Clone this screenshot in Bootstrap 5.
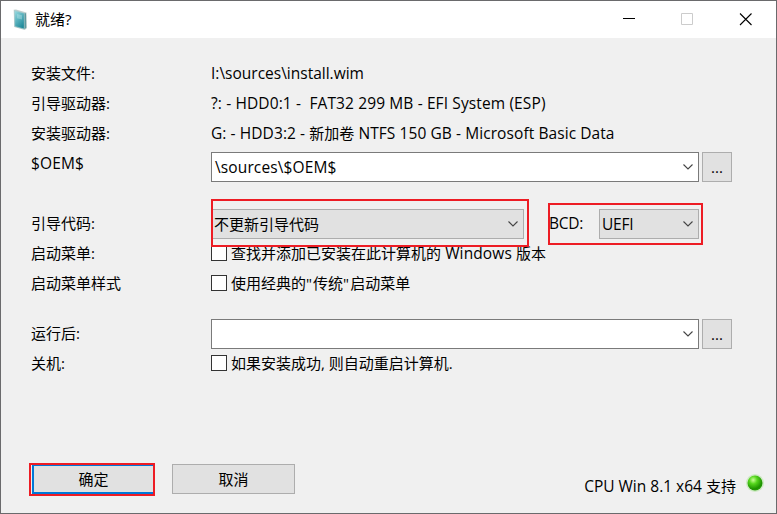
<!DOCTYPE html>
<html lang="zh-CN">
<head>
<meta charset="utf-8">
<meta name="viewport" content="width=device-width, initial-scale=1">
<title>就绪?</title>
<link href="https://cdn.jsdelivr.net/npm/bootstrap@5.3.0/dist/css/bootstrap.min.css" rel="stylesheet">
<style>
body { font-family: "Open Sans", "Noto Sans CJK SC", sans-serif; font-size: 15px; color: #000; }
.dialog { width: 777px; height: 514px; border: 1px solid #6a6a6c; background: #f0f0f0; }
.titlebar { height: 37px; padding: 0 1px 0 9px; line-height: 37px; }
.titlebar .caption { margin-left: 5px; }
.sysbtn { width: 58px; height: 37px; }
.form-area { padding: 20px 44px 0 30px; }
.line { height: 30px; line-height: 30px; white-space: pre; }
.line-tall { height: 60px; }
.line-gap { margin-top: 20px; }
.key { width: 180px; }
.combo { height: 30px; line-height: 28px; border: 1px solid #7a7a7a; background: #fff; padding: 0 4px 0 3px; margin-top: 1px; }
.combo-wide { width: 488px; }
.combo-boot { width: 313px; padding-left: 2px; }
.combo-bcd { width: 100px; margin-left: 15px; padding-left: 2px; }
.combo-gray { background: #e1e1e1; border-color: #adadad; }
.bcd-label { margin-left: 25px; width: 35px; }
.push { border: 1px solid #adadad; border-radius: 0; background: #e1e1e1; color: #000; font-size: 15px; line-height: 28px; height: 30px; padding: 0; }
.push-dots { width: 30px; margin: 1px 0 0 3px; }
.push-main { width: 123px; }
.push-ok { border: 2px solid #0078d7; line-height: 26px; }
.push-cancel { margin-left: 17px; }
.drop { margin-top: 4px; }
.tick { width: 16px; height: 16px; margin: 0 4px 0 0; border: 1px solid #333; border-radius: 0 !important; background: #fff; flex: none; }
.footer-area { padding: 0 11px 0 31px; margin-top: 86px; height: 49px; }
.status { margin-top: 7px; line-height: 30px; white-space: pre; }
.lamp { margin: 7px 0 0 9px; }
.frame { position: absolute; border: 2px solid #ed1c24; pointer-events: none; }
.frame-boot { left: 210px; top: 198px; width: 318px; height: 48px; }
.frame-bcd { left: 547px; top: 202px; width: 155px; height: 42px; }
.frame-ok { left: 28px; top: 462px; width: 126px; height: 33px; }
.latin { font-size: 15.5px; }
.loose { letter-spacing: .12px; }
.looser { letter-spacing: .3px; }
.quote { letter-spacing: 1.1px; }
.spread { letter-spacing: .08px; }
.tighter { letter-spacing: -.25px; }
</style>
</head>
<body class="overflow-hidden">
<main class="dialog position-relative overflow-hidden">
  <header class="titlebar d-flex align-items-center bg-white">
    <svg width="20" height="22" viewBox="0 0 20 22">
      <defs><linearGradient id="box" x1="0" y1="0" x2=".6" y2="1"><stop offset="0" stop-color="#9fdde2"/><stop offset=".45" stop-color="#63b8c3"/><stop offset="1" stop-color="#218a9b"/></linearGradient></defs>
      <path d="M3.700 .800 6 .500 16.500 3.600 17 19 14.800 21 4.200 18Z" fill="#c3cfce"/>
      <path d="M4.500 1.500 14.300 4.200 14.300 20 4.800 17.400Z" fill="url(#box)" stroke="#a5c9cb" stroke-width=".6"/>
      <path d="M14.600 4.300 16 4.200 16.200 18.800 14.600 20.200Z" fill="#5c999f"/>
      <path d="M7 5 12 6.300V10.500L7 9.200Z" fill="#c8eff0" opacity=".35"/>
    </svg>
    <span class="caption">就绪?</span>
    <div class="d-flex ms-auto">
      <span class="sysbtn"><svg class="d-block" width="58" height="37"><path d="M22 17.500H34" stroke="#000"/></svg></span>
      <span class="sysbtn"><svg class="d-block" width="58" height="37"><path d="M22.500 12.500H33.500V23.500H22.500Z" fill="none" stroke="#ccc"/></svg></span>
      <span class="sysbtn"><svg class="d-block" width="58" height="37"><path d="M23 12.500 34.500 24M34.500 12.500 23 24" stroke="#000" stroke-width="1.100"/></svg></span>
    </div>
  </header>

  <section class="form-area">
    <div class="line d-flex"><span class="key">安装文件:</span><span class="latin">I:\sources\install.wim</span></div>
    <div class="line d-flex"><span class="key">引导驱动器:</span><span class="latin loose">?: - HDD0:1 -  FAT32 299 MB - EFI System (ESP)</span></div>
    <div class="line d-flex"><span class="key">安装驱动器:</span><span><span class="latin spread">G: - HDD3:2 - </span>新加卷<span class="latin spread"> NTFS 150 GB - Microsoft Basic Data</span></span></div>
    <div class="line line-tall d-flex align-items-start">
      <span class="key latin loose">$OEM$</span>
      <div class="combo combo-wide drop d-flex align-items-center justify-content-between"><span class="latin loose">\sources\$OEM$</span><svg width="12" height="8"><path d="M1.500 1.500 6 6 10.500 1.500" fill="none" stroke="#444" stroke-width="1.100"/></svg></div>
      <button class="btn push push-dots drop">...</button>
    </div>
    <div class="line d-flex">
      <span class="key">引导代码:</span>
      <div class="combo combo-gray combo-boot d-flex align-items-center justify-content-between"><span>不更新引导代码</span><svg width="12" height="8"><path d="M1.500 1.500 6 6 10.500 1.500" fill="none" stroke="#444" stroke-width="1.100"/></svg></div>
      <span class="bcd-label latin tighter">BCD:</span>
      <div class="combo combo-gray combo-bcd d-flex align-items-center justify-content-between"><span class="latin tighter">UEFI</span><svg width="12" height="8"><path d="M1.500 1.500 6 6 10.500 1.500" fill="none" stroke="#444" stroke-width="1.100"/></svg></div>
    </div>
    <div class="line d-flex"><span class="key">启动菜单:</span><label class="d-flex align-items-center"><input type="checkbox" class="form-check-input tick"><span>查找并添加已安装在此计算机的<span class="latin loose"> Windows </span>版本</span></label></div>
    <div class="line d-flex"><span class="key">启动菜单样式</span><label class="d-flex align-items-center"><input type="checkbox" class="form-check-input tick"><span>使用经典的<span class="quote">"</span>传统<span class="quote">"</span>启动菜单</span></label></div>
    <div class="line line-gap d-flex">
      <span class="key">运行后:</span>
      <div class="combo combo-wide d-flex align-items-center justify-content-end"><svg width="12" height="8"><path d="M1.500 1.500 6 6 10.500 1.500" fill="none" stroke="#444" stroke-width="1.100"/></svg></div>
      <button class="btn push push-dots">...</button>
    </div>
    <div class="line d-flex"><span class="key">关机:</span><label class="d-flex align-items-center"><input type="checkbox" class="form-check-input tick"><span>如果安装成功, 则自动重启计算机.</span></label></div>
  </section>

  <footer class="footer-area d-flex align-items-start">
    <button class="btn push push-main push-ok">确定</button>
    <button class="btn push push-main push-cancel">取消</button>
    <div class="d-flex ms-auto">
      <span class="status"><span class="latin">CPU Win 8.1 x64 </span>支持</span>
      <svg class="lamp" width="20" height="24" viewBox="0 0 20 24">
        <defs><radialGradient id="led" cx=".38" cy=".3" r=".75"><stop offset="0" stop-color="#c9ff96"/><stop offset=".35" stop-color="#55d61d"/><stop offset=".8" stop-color="#1d9100"/><stop offset="1" stop-color="#2ca40c"/></radialGradient></defs>
        <circle cx="10" cy="12" r="9" fill="#b7e5a7" opacity=".6"/>
        <circle cx="10" cy="12" r="7.500" fill="url(#led)"/>
      </svg>
    </div>
  </footer>

  <div class="frame frame-boot"></div>
  <div class="frame frame-bcd"></div>
  <div class="frame frame-ok"></div>
</main>
<script src="https://cdn.jsdelivr.net/npm/bootstrap@5.3.0/dist/js/bootstrap.bundle.min.js"></script>
</body>
</html>
